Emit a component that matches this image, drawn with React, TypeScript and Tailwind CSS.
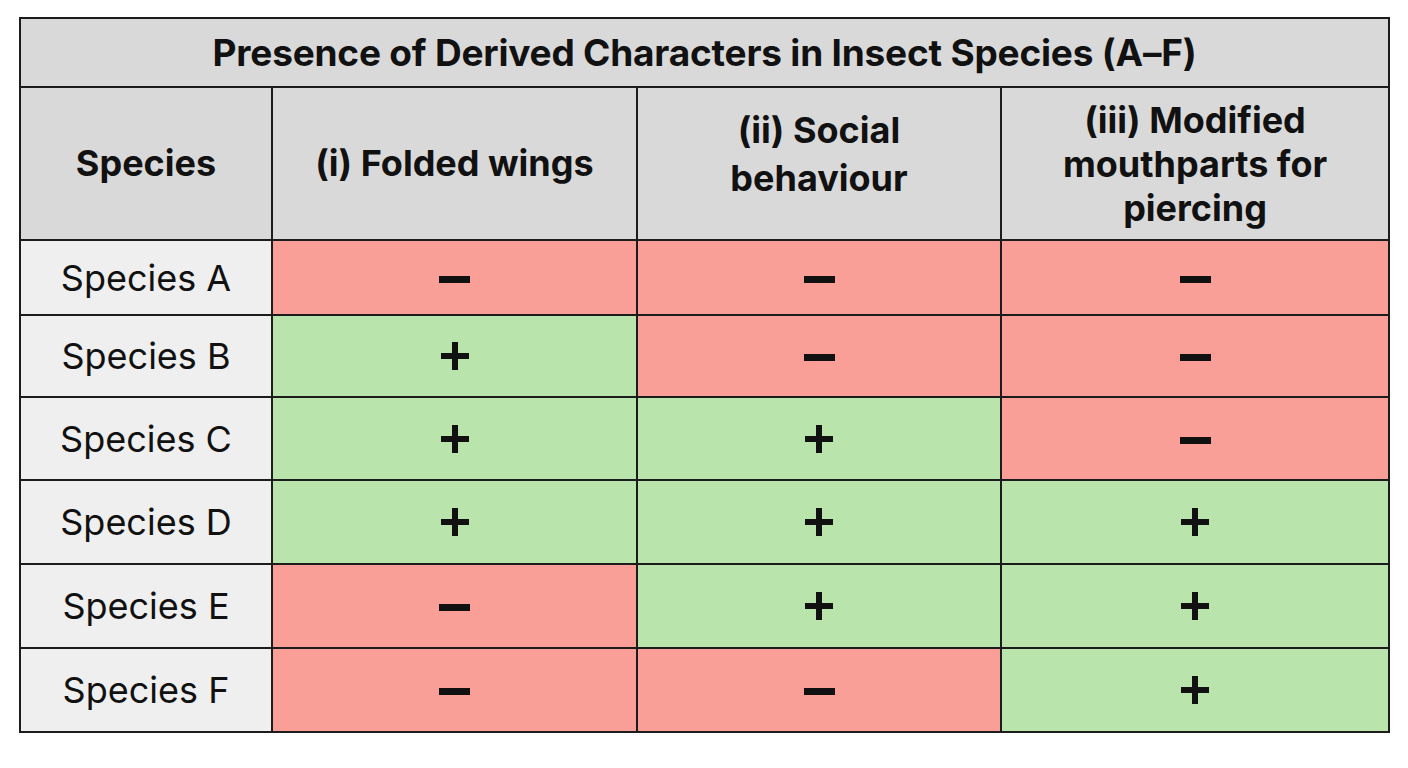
import React from "react";

const rows: { name: string; vals: boolean[]; h: string }[] = [
  { name: "Species A", vals: [false, false, false], h: "h-[75px]" },
  { name: "Species B", vals: [true, false, false], h: "h-[82px]" },
  { name: "Species C", vals: [true, true, false], h: "h-[83px]" },
  { name: "Species D", vals: [true, true, true], h: "h-[84px]" },
  { name: "Species E", vals: [false, true, true], h: "h-[84px]" },
  { name: "Species F", vals: [false, false, true], h: "h-[84px]" },
];

function Plus() {
  return (
    <span className="relative inline-block w-[28px] h-[28px] align-middle">
      <span className="absolute left-0 top-[11px] w-[28px] h-[6px] bg-[#111]" />
      <span className="absolute top-0 left-[11px] w-[6px] h-[28px] bg-[#111]" />
    </span>
  );
}

function Minus() {
  return <span className="inline-block w-[31px] h-[7px] bg-[#111] align-middle" />;
}

export default function App() {
  return (
    <div className="min-h-screen bg-white pt-[17px] pl-[19px]" style={{ fontFamily: "Inter, 'Noto Sans', sans-serif" }}>
      <table className="border-collapse w-[1369px] table-fixed text-[#111]">
        <colgroup>
          <col className="w-[252px]" />
          <col className="w-[365px]" />
          <col className="w-[364px]" />
          <col className="w-[388px]" />
        </colgroup>
        <thead>
          <tr className="h-[69px]">
            <th colSpan={4} className="border-2 border-[#1c1c1c] bg-[#d9d9d9] text-[37px] font-bold text-center tracking-[-0.2px]">
              Presence of Derived Characters in Insect Species (A–F)
            </th>
          </tr>
          <tr className="h-[153px]">
            <th className="border-2 border-[#1c1c1c] bg-[#d9d9d9] text-[36px] font-bold leading-[45px] text-center">Species</th>
            <th className="border-2 border-[#1c1c1c] bg-[#d9d9d9] text-[36px] font-bold leading-[45px] text-center">(i) Folded wings</th>
            <th className="border-2 border-[#1c1c1c] bg-[#d9d9d9] text-[36px] font-bold leading-[48px] text-center px-[60px] pb-[20px]">(ii) Social behaviour</th>
            <th className="border-2 border-[#1c1c1c] bg-[#d9d9d9] text-[36px] font-bold leading-[44px] text-center px-[44px]">(iii) Modified mouthparts for piercing</th>
          </tr>
        </thead>
        <tbody>
          {rows.map((r) => (
            <tr key={r.name} className={r.h}>
              <td className="border-2 border-[#1c1c1c] bg-[#efefef] text-[36px] text-center">{r.name}</td>
              {r.vals.map((v, i) => (
                <td
                  key={i}
                  className={`border-2 border-[#1c1c1c] text-center ${v ? "bg-[#b9e4ac]" : "bg-[#fa9f98]"}`}
                >
                  {v ? <Plus /> : <Minus />}
                </td>
              ))}
            </tr>
          ))}
        </tbody>
      </table>
    </div>
  );
}
